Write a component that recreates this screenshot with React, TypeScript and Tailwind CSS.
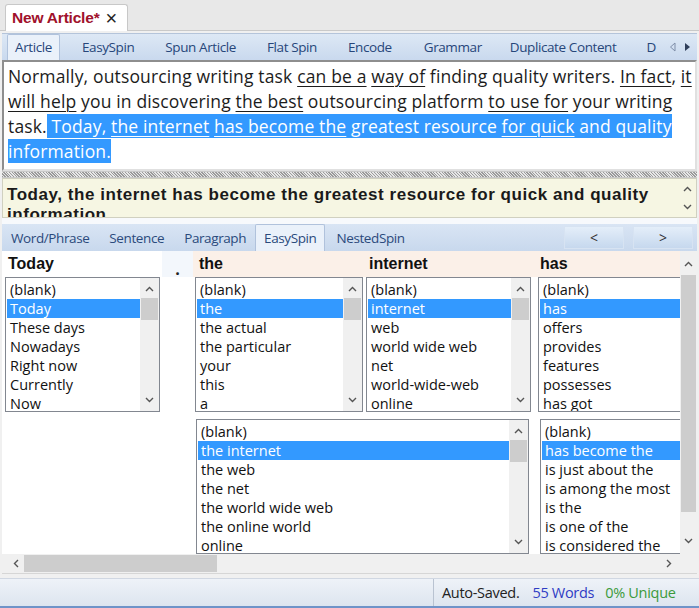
import React from "react";

const UI = { fontFamily: '"Open Sans", "Noto Sans", sans-serif' };
const BOLD = { fontFamily: '"Liberation Sans", Arial, sans-serif' };

function Up() {
  return (
    <svg width="9" height="6" viewBox="0 0 9 6"><path d="M1 5 L4.5 1.5 L8 5" fill="none" stroke="#555" strokeWidth="1.4" /></svg>
  );
}
function Down() {
  return (
    <svg width="9" height="6" viewBox="0 0 9 6"><path d="M1 1 L4.5 4.5 L8 1" fill="none" stroke="#555" strokeWidth="1.4" /></svg>
  );
}
function Left() {
  return (
    <svg width="6" height="9" viewBox="0 0 6 9"><path d="M5 1 L1.5 4.5 L5 8" fill="none" stroke="#555" strokeWidth="1.4" /></svg>
  );
}
function Right() {
  return (
    <svg width="6" height="9" viewBox="0 0 6 9"><path d="M1 1 L4.5 4.5 L1 8" fill="none" stroke="#555" strokeWidth="1.4" /></svg>
  );
}

function ListBox({
  items,
  sel,
  w,
  scroll = true,
  rightBorder = true,
}: {
  items: string[];
  sel: number;
  w: string;
  scroll?: boolean;
  rightBorder?: boolean;
}) {
  return (
    <div
      className={`${w} h-[135px] bg-white border-t border-l border-b border-[#828790] ${rightBorder ? "border-r" : ""} flex overflow-hidden`}
    >
      <div className="flex-1 min-w-0 pt-[2px] pl-[1px]">
        {items.map((t, i) => (
          <div
            key={i}
            className={`h-[19px] leading-[19px] pl-[3px] text-[14.5px] whitespace-nowrap ${i === sel ? "bg-[#3399ff] text-white" : "text-[#111]"}`}
            style={UI}
          >
            {t}
          </div>
        ))}
      </div>
      {scroll && (
        <div className="w-[19px] bg-[#f0f0f0] flex flex-col items-center">
          <div className="h-[18px] flex items-center justify-center pt-[4px]"><Up /></div>
          <div className="w-[17px] h-[22px] bg-[#cdcdcd] mt-[2px]" />
          <div className="flex-1" />
          <div className="h-[18px] flex items-center justify-center pb-[4px]"><Down /></div>
        </div>
      )}
    </div>
  );
}

const U = ({ children }: { children: React.ReactNode }) => (
  <span className="underline underline-offset-[3px] decoration-1">{children}</span>
);

export default function App() {
  const tabs2 = ["Word/Phrase", "Sentence", "Paragraph"];
  return (
    <div className="w-[699px] h-[608px] bg-[#f0f0f0] flex flex-col overflow-hidden" style={UI}>
      {/* document tab bar */}
      <div className="h-[31px] bg-[#e8e8e8] pl-[5px] pt-[4px] flex border-b border-[#c9c9c9]">
        <div className="w-[123px] h-[27px] bg-white border border-b-0 border-[#c8c8c8] rounded-t-[3px] flex items-center pl-[6px] gap-[6px]">
          <span className="text-[15.5px] font-bold text-[#a0112b] tracking-[-0.2px]" style={BOLD}>New Article*</span>
          <span className="text-[20px] text-[#222] leading-none" style={BOLD}>×</span>
        </div>
      </div>

      {/* main panel */}
      <div className="flex-1 flex flex-col px-[2px] pt-[2px]">
        {/* tab strip 1 */}
        <div className="h-[27px] bg-gradient-to-b from-[#dde8f5] to-[#c9d9ee] border-t border-[#b4c4da] flex items-end pl-[5px]">
          <div className="h-[26px] px-[7px] bg-[#eaf1fa] border border-b-0 border-[#b0c2dc] rounded-t-[2px] flex items-center text-[13.5px] text-[#27467a] tracking-[-0.4px]">Article</div>
          <div className="flex items-center h-[26px] text-[13.5px] text-[#27467a] tracking-[-0.4px]">
            <span className="ml-[22px]">EasySpin</span>
            <span className="ml-[31px]">Spun Article</span>
            <span className="ml-[31px]">Flat Spin</span>
            <span className="ml-[31px]">Encode</span>
            <span className="ml-[32px]">Grammar</span>
            <span className="ml-[28px]">Duplicate Content</span>
            <span className="ml-[30px]">D</span>
          </div>
          <div className="flex items-center h-[26px] ml-[13px] gap-[8px]">
            <svg width="7" height="10" viewBox="0 0 7 10"><path d="M6 1 L1.5 5 L6 9 Z" fill="none" stroke="#7f8ea8" strokeWidth="1" /></svg>
            <svg width="7" height="10" viewBox="0 0 7 10"><path d="M1 1 L6 5 L1 9 Z" fill="#2f3f5a" /></svg>
          </div>
        </div>

        {/* editor */}
        <div className="h-[111px] bg-white border-2 border-t-[#8e8e8e] border-l-[#8e8e8e] border-r-[#e0e0e0] border-b-[#e0e0e0] pl-[4px] pt-[2px] overflow-hidden text-[17.5px] leading-[25px] text-[#1c1c1c] whitespace-nowrap tracking-[0.15px]">
          <div>Normally, outsourcing writing task <U>can be a</U> <U>way of</U> finding quality writers. <U>In fact</U>, <U>it</U></div>
          <div><U>will help</U> you in discovering <U>the best</U> outsourcing platform <U>to use for</U> your writing</div>
          <div>
            task.<span className="bg-[#3399ff] text-white"> Today, <U>the internet</U> <U>has become the</U> greatest resource <U>for quick</U> and quality </span>
          </div>
          <div><span className="bg-[#3399ff] text-white">information.</span></div>
        </div>

        {/* splitter */}
        <div className="h-[7px] bg-[repeating-linear-gradient(45deg,#9a9a9a_0px,#9a9a9a_1px,#e8e8e8_1px,#e8e8e8_2px)] border-y border-[#c8c8c8]" />

        {/* sentence box */}
        <div className="h-[40px] bg-[#f6f6e3] border border-[#d0d0c0] flex overflow-hidden">
          <div className="flex-1 pl-[4px] pt-[6px] text-[17px] leading-[20px] font-bold text-[#1a1a1a] tracking-[0.55px]" style={BOLD}>
            Today, the internet has become the greatest resource for quick and quality<br />information
          </div>
          <div className="w-[18px] flex flex-col items-center justify-between py-[7px]">
            <Up />
            <Down />
          </div>
        </div>

        <div className="h-[6px] bg-[#f7f9fc]" />

        {/* tab strip 2 */}
        <div className="h-[27px] bg-gradient-to-b from-[#d9e5f4] to-[#c8d8ed] flex items-end pl-[4px]">
          <div className="flex items-center h-[26px] text-[13.5px] text-[#2b4a7c] tracking-[-0.4px]">
            {tabs2.map((t, i) => (
              <span key={t} className={i === 0 ? "ml-[5px]" : "ml-[20px]"}>{t}</span>
            ))}
          </div>
          <div className="ml-[9px] h-[27px] px-[8px] bg-[#eaf1fa] border border-b-0 border-[#b0c2dc] rounded-t-[2px] flex items-center text-[13.5px] text-[#2b4a7c] tracking-[-0.4px]">EasySpin</div>
          <span className="ml-[11px] h-[26px] flex items-center text-[13.5px] text-[#2b4a7c] tracking-[-0.4px]">NestedSpin</span>
          <div className="flex-1" />
          <div className="flex gap-[9px] mr-[4px] mb-[2px]">
            <div className="w-[60px] h-[23px] bg-gradient-to-b from-[#e4eef9] to-[#c6d8ee] border border-[#d7e3f2] flex items-center justify-center text-[14px] text-[#333]">&lt;</div>
            <div className="w-[60px] h-[23px] bg-gradient-to-b from-[#e4eef9] to-[#c6d8ee] border border-[#d7e3f2] flex items-center justify-center text-[14px] text-[#333]">&gt;</div>
          </div>
        </div>

        {/* content area */}
        <div className="h-[303px] bg-white flex">
          <div className="flex-1 flex overflow-hidden">
            {/* col 1 */}
            <div className="w-[158px] pl-[3px] flex flex-col">
              <div className="h-[26px] flex items-center pl-[3px] font-bold text-[16px] text-[#111]" style={BOLD}>Today</div>
              <ListBox w="w-[155px]" sel={1} items={["(blank)", "Today", "These days", "Nowadays", "Right now", "Currently", "Now"]} />
            </div>
            {/* dot col */}
            <div className="w-[31px] ml-[2px] flex flex-col">
              <div className="h-[26px] bg-[#f3f7fc] flex justify-center">
                <span className="text-[16px] font-bold leading-none mt-[10px] text-[#222]">.</span>
              </div>
            </div>
            {/* group */}
            <div className="flex-1 flex flex-col min-w-0">
              <div className="h-[26px] bg-[#fbf0e8] flex items-center font-bold text-[16px] text-[#111]" style={BOLD}>
                <span className="w-[170px] pl-[6px]">the</span>
                <span className="w-[172px] pl-[6px]">internet</span>
                <span className="pl-[5px]">has</span>
              </div>
              <div className="flex pl-[2px]">
                <ListBox w="w-[168px]" sel={1} items={["(blank)", "the", "the actual", "the particular", "your", "this", "a"]} />
                <div className="w-[3px]" />
                <ListBox w="w-[165px]" sel={1} items={["(blank)", "internet", "web", "world wide web", "net", "world-wide-web", "online"]} />
                <div className="w-[7px]" />
                <ListBox w="flex-1" sel={1} scroll={false} rightBorder={false} items={["(blank)", "has", "offers", "provides", "features", "possesses", "has got"]} />
              </div>
              <div className="flex pl-[3px] mt-[7px]">
                <ListBox w="w-[333px]" sel={1} items={["(blank)", "the internet", "the web", "the net", "the world wide web", "the online world", "online"]} />
                <div className="w-[11px]" />
                <ListBox w="flex-1" sel={1} scroll={false} rightBorder={false} items={["(blank)", "has become the", "is just about the", "is among the most", "is the", "is one of the", "is considered the"]} />
              </div>
            </div>
          </div>
          {/* vertical scrollbar */}
          <div className="w-[17px] bg-[#f0f0f0] flex flex-col items-center">
            <div className="h-[22px] flex items-center justify-center pt-[4px]"><Up /></div>
            <div className="w-[15px] h-[237px] bg-[#cdcdcd] mt-[2px]" />
            <div className="flex-1" />
            <div className="h-[20px] flex items-center justify-center pb-[6px]"><Down /></div>
          </div>
        </div>

        {/* horizontal scrollbar */}
        <div className="h-[20px] bg-[#f0f0f0] flex items-center border-b border-[#d6d6d6]">
          <div className="w-[22px] flex justify-center pl-[6px]"><Left /></div>
          <div className="w-[193px] h-[17px] bg-[#cdcdcd]" />
          <div className="flex-1" />
          <div className="w-[22px] flex justify-center mr-[17px]"><Right /></div>
        </div>
        <div className="h-[3px]" />
      </div>

      {/* status bar */}
      <div className="h-[30px] bg-gradient-to-b from-[#eef2f8] to-[#dde5ef] border-t border-[#d0d7e2] border-b-2 border-b-[#6f93c8] flex">
        <div className="w-[433px]" />
        <div className="flex-1 border-l border-[#b9c3d1] flex items-center pl-[8px] text-[14.5px] tracking-[-0.3px]">
          <span className="text-[#222]">Auto-Saved.</span>
          <span className="ml-[13px] text-[#2e3bc4]">55 Words</span>
          <span className="ml-[11px] text-[#3a9a3a]">0% Unique</span>
        </div>
      </div>
    </div>
  );
}
